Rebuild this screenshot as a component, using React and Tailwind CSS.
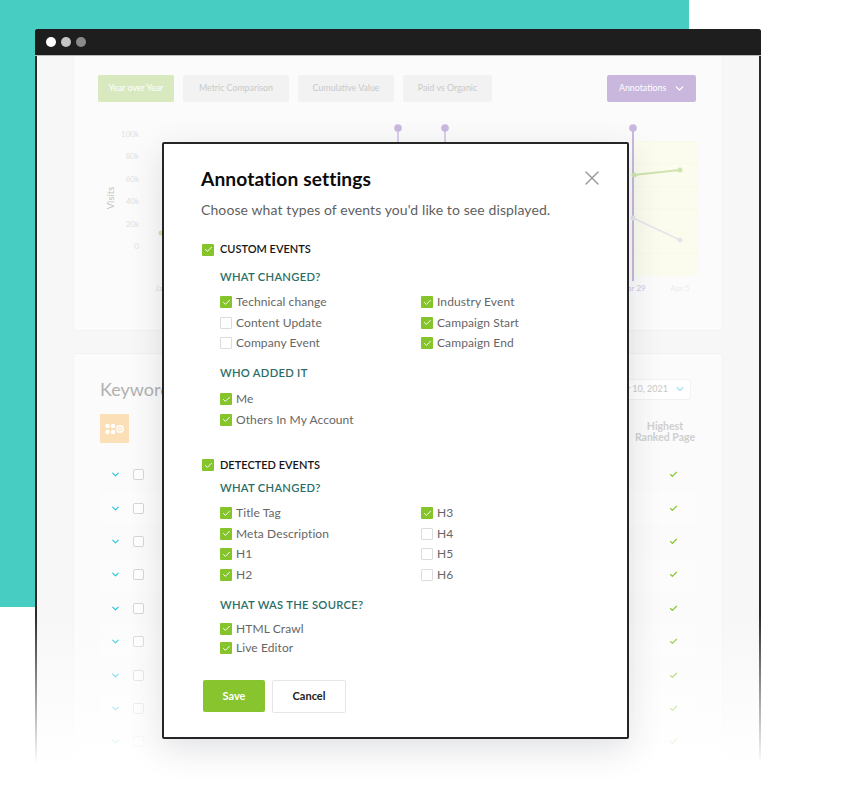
import { Check, ChevronDown, X } from "lucide-react";

const font = "font-['Lato','Liberation_Sans',sans-serif]";

const customLeft = [
  ["Technical change", true],
  ["Content Update", false],
  ["Company Event", false],
];
const customRight = [
  ["Industry Event", true],
  ["Campaign Start", true],
  ["Campaign End", true],
];
const detectedLeft = [
  ["Title Tag", true],
  ["Meta Description", true],
  ["H1", true],
  ["H2", true],
];
const detectedRight = [
  ["H3", true],
  ["H4", false],
  ["H5", false],
  ["H6", false],
];

const tabs = [
  ["Year over Year", "w-[76px] bg-[#d8e9bf] text-white"],
  ["Metric Comparison", "w-[106px] bg-[#f2f2f2] text-[#c9c9c9]"],
  ["Cumulative Value", "w-[96px] bg-[#f2f2f2] text-[#c9c9c9]"],
  ["Paid vs Organic", "w-[89px] bg-[#f2f2f2] text-[#c9c9c9]"],
];

const rows = [0, 1, 2, 3, 4, 5, 6, 7, 8];

function Box({ on }) {
  if (on) {
    return (
      <span className="flex h-3 w-3 shrink-0 items-center justify-center rounded-[1px] bg-[#86c42b]">
        <Check className="h-[9px] w-[9px] text-white" strokeWidth={2.5} />
      </span>
    );
  }
  return <span className="h-3 w-3 shrink-0 rounded-[1px] border border-[#dcdcdc] bg-white" />;
}

function Option({ label, on }) {
  return (
    <div className="flex h-[20.5px] items-center gap-[4px] text-[12px] tracking-[0.1px] text-[#666]">
      <Box on={on} />
      <span>{label}</span>
    </div>
  );
}

function Heading({ children, className }) {
  return (
    <h3 className={`text-[11.2px] font-semibold leading-4 tracking-[0.3px] text-[#2b6e68] ${className}`}>
      {children}
    </h3>
  );
}

function Group({ children, className }) {
  return (
    <div className={`flex h-4 items-center gap-[6px] text-[11px] font-semibold text-[#161616] ${className}`}>
      {children}
    </div>
  );
}

function Chart() {
  const ticks = [
    ["100k", 134],
    ["80k", 156],
    ["60k", 179],
    ["40k", 201],
    ["20k", 224],
    ["0", 246],
  ];
  return (
    <svg className="mt-[18px] h-[175px] w-[648px]" viewBox="73 120 648 175">
      <rect x="632" y="141" width="65" height="135" fill="#fbfcee" />
      {ticks.map(([t, y]) => (
        <g key={t}>
          <text x="138" y={y + 3} textAnchor="end" fontSize="8" fill="#e0e0e0">{t}</text>
          <line x1="632" x2="697" y1={y + 8} y2={y + 8} stroke="#f8f9e8" />
        </g>
      ))}
      <text x="0" y="0" fontSize="9.5" fill="#c4c4c4" textAnchor="middle" transform="translate(113 198) rotate(-90)">Visits</text>
      <line x1="397" x2="397" y1="128" y2="145" stroke="#dccdec" strokeWidth="2" />
      <line x1="444" x2="444" y1="128" y2="145" stroke="#dccdec" strokeWidth="2" />
      <line x1="632" x2="632" y1="128" y2="281" stroke="#c9b8df" strokeWidth="2" />
      <circle cx="397" cy="128" r="3.8" fill="#c9b8df" />
      <circle cx="444" cy="128" r="3.8" fill="#c9b8df" />
      <circle cx="632" cy="128" r="3.8" fill="#c9b8df" />
      <path d="M632 175 L679 170" stroke="#cfe4ae" strokeWidth="2" fill="none" />
      <circle cx="633" cy="175" r="2.5" fill="#cfe4ae" />
      <circle cx="679" cy="170" r="2.5" fill="#cfe4ae" />
      <path d="M632 218 L679 240" stroke="#e6e4ea" strokeWidth="1.5" fill="none" />
      <circle cx="632" cy="218" r="2.5" fill="#e6e4ea" />
      <circle cx="679" cy="240" r="2.5" fill="#e6e4ea" />
      <circle cx="160" cy="233" r="2.5" fill="#d6e5a8" />
      <text x="154" y="291" fontSize="8" fill="#e0e0e0">Jan</text>
      <text x="632" y="291" fontSize="8" fill="#d2c4e4" textAnchor="middle">Mar 29</text>
      <text x="679" y="291" fontSize="8" fill="#ececec" textAnchor="middle">Apr 5</text>
    </svg>
  );
}

function Dashboard() {
  return (
    <div className="mx-[36px] flex h-full flex-col">
      <div className="h-[275px] rounded-[1px] border-x border-b border-[#f3f3f3] bg-[#fbfbfb]">
        <div className="flex items-center gap-[9px] pl-[24px] pr-[26px] pt-[19px]">
          {tabs.map(([label, cls]) => (
            <div key={label} className={`flex h-[27px] items-center justify-center rounded-[2px] pb-[1px] text-[8.8px] ${cls}`}>
              {label}
            </div>
          ))}
          <div className="ml-auto flex h-[27px] w-[89px] items-center justify-between rounded-[2px] bg-[#c9b7dd] pb-[1px] pl-[12px] pr-[10px] text-[8.8px] text-white">
            Annotations
            <ChevronDown className="h-[13px] w-[13px]" strokeWidth={2.5} />
          </div>
        </div>
        <Chart />
      </div>
      <div className="mt-[22px] min-h-0 flex-1 rounded-[1px] border border-[#f3f3f3] bg-[#fbfbfb] pl-[26px] pr-[26px]">
        <div className="flex h-[60px] items-center justify-between pt-[10px]">
          <span className="text-[18px] text-[#b1b1b1]">Keywords</span>
          <div className="mr-[5px] flex h-[21px] w-[110px] items-center justify-end gap-[6px] rounded-[3px] border border-[#f2f2f2] bg-white pr-[4px] text-[9px] text-[#c9c9c9]">
            Apr 10, 2021
            <ChevronDown className="h-[12px] w-[12px] text-[#a9e4ee]" strokeWidth={2.5} />
          </div>
        </div>
        <div className="flex items-start justify-between">
          <div className="flex h-[29px] w-[29px] items-center justify-center rounded-[1px] bg-[#fbdfb6]">
            <svg width="20" height="12" viewBox="0 0 20 12" fill="#fff">
              <circle cx="2.5" cy="3" r="2.2" />
              <circle cx="8" cy="3" r="2.2" />
              <circle cx="2.5" cy="9" r="2.2" />
              <circle cx="8" cy="9" r="2.2" />
              <circle cx="15" cy="6" r="3.2" fill="none" stroke="#fff" strokeWidth="1.4" />
              <path d="M15 4v4M13 6h4" stroke="#fff" strokeWidth="1" />
            </svg>
          </div>
          <div className="mt-[7px] w-[62px] text-center text-[10.5px] font-bold leading-[11px] text-[#cfcfcf]">
            Highest Ranked Page
          </div>
        </div>
        <div className="mt-[15px] flex flex-col">
          {rows.map((i) => (
            <div key={i} className={`flex h-[33.4px] items-center ${i % 2 ? "bg-white/40" : ""}`}>
              <ChevronDown className="ml-[10px] h-[11px] w-[11px] text-[#28c4de]" strokeWidth={2.5} />
              <span className="ml-[12px] h-[11px] w-[11px] rounded-[2px] border border-[#d6d6d6] bg-white" />
              <Check className="ml-auto mr-[18px] h-[9px] w-[9px] text-[#86c42b]" strokeWidth={3} />
            </div>
          ))}
        </div>
      </div>
    </div>
  );
}

function Modal() {
  return (
    <div className={`absolute left-[162px] top-[142px] h-[597px] w-[467px] rounded-[2px] border-2 border-[#252525] bg-white pl-[37px] pt-[22.5px] shadow-[0_10px_34px_rgba(40,50,70,0.14)] ${font}`}>
      <X className="absolute right-[23px] top-[22px] h-6 w-6 text-[#999]" strokeWidth={1.4} />
      <h2 className="text-[19.2px] font-bold leading-6 tracking-[0.1px] text-[#0b0b0b]">Annotation settings</h2>
      <p className="mt-[9.5px] text-[14px] leading-5 tracking-[0.1px] text-[#5f5f5f]">
        Choose what types of events you'd like to see displayed.
      </p>

      <Group className="mt-[21.5px] ml-[1px]">
        <Box on />
        CUSTOM EVENTS
      </Group>
      <Heading className="ml-[19px] mt-[11px]">WHAT CHANGED?</Heading>
      <div className="ml-[19px] mt-[7.5px] grid grid-cols-[201px_1fr]">
        <div>{customLeft.map(([l, on]) => <Option key={l} label={l} on={on} />)}</div>
        <div>{customRight.map(([l, on]) => <Option key={l} label={l} on={on} />)}</div>
      </div>
      <Heading className="ml-[19px] mt-[11px]">WHO ADDED IT</Heading>
      <div className="ml-[19px] mt-[8.5px]">
        <Option label="Me" on />
        <Option label="Others In My Account" on />
      </div>

      <Group className="mt-[27px] ml-[1px]">
        <Box on />
        DETECTED EVENTS
      </Group>
      <Heading className="ml-[19px] mt-[6.5px]">WHAT CHANGED?</Heading>
      <div className="ml-[19px] mt-[7.5px] grid grid-cols-[201px_1fr]">
        <div>{detectedLeft.map(([l, on]) => <Option key={l} label={l} on={on} />)}</div>
        <div>{detectedRight.map(([l, on]) => <Option key={l} label={l} on={on} />)}</div>
      </div>
      <Heading className="ml-[19px] mt-[11.5px]">WHAT WAS THE SOURCE?</Heading>
      <div className="ml-[19px] mt-[6px]">
        <div className="-mb-[1px]"><Option label="HTML Crawl" on /></div>
        <Option label="Live Editor" on />
      </div>

      <div className="ml-[2px] mt-[21px] flex items-center gap-[7px]">
        <button className="flex h-[32px] w-[62px] items-center justify-center rounded-[2px] bg-[#88c42e] text-[11px] font-bold text-white">
          Save
        </button>
        <button className="flex h-[33px] w-[74px] items-center justify-center rounded-[2px] border border-[#e6e6e6] bg-white text-[11px] font-bold text-[#222]">
          Cancel
        </button>
      </div>
    </div>
  );
}

export default function App() {
  return (
    <div className={`relative h-[799px] w-[856px] overflow-hidden bg-white ${font}`}>
      <div className="absolute left-0 top-0 h-[607px] w-[689px] bg-[#47cdc2]" />
      <div className="absolute left-[35px] top-[29px] flex h-[735px] w-[726px] flex-col rounded-t-[3px] border-x-2 border-[#2a2a2a] bg-[#f7f7f7]">
        <div className="-mx-[2px] flex h-[27px] shrink-0 items-center gap-[5px] rounded-t-[3px] border-b border-[#bbb] bg-[#1e1e1e] pl-[11px]">
          <span className="h-[10px] w-[10px] rounded-full bg-white" />
          <span className="h-[10px] w-[10px] rounded-full bg-[#c4c4c4]" />
          <span className="h-[10px] w-[10px] rounded-full bg-[#8a8a8a]" />
        </div>
        <div className="min-h-0 flex-1 overflow-hidden">
          <Dashboard />
        </div>
      </div>
      <div className="absolute inset-x-[30px] bottom-[35px] h-[150px] bg-gradient-to-b from-white/0 to-white" />
      <div className="absolute inset-x-[30px] bottom-0 h-[36px] bg-white" />
      <Modal />
    </div>
  );
}
